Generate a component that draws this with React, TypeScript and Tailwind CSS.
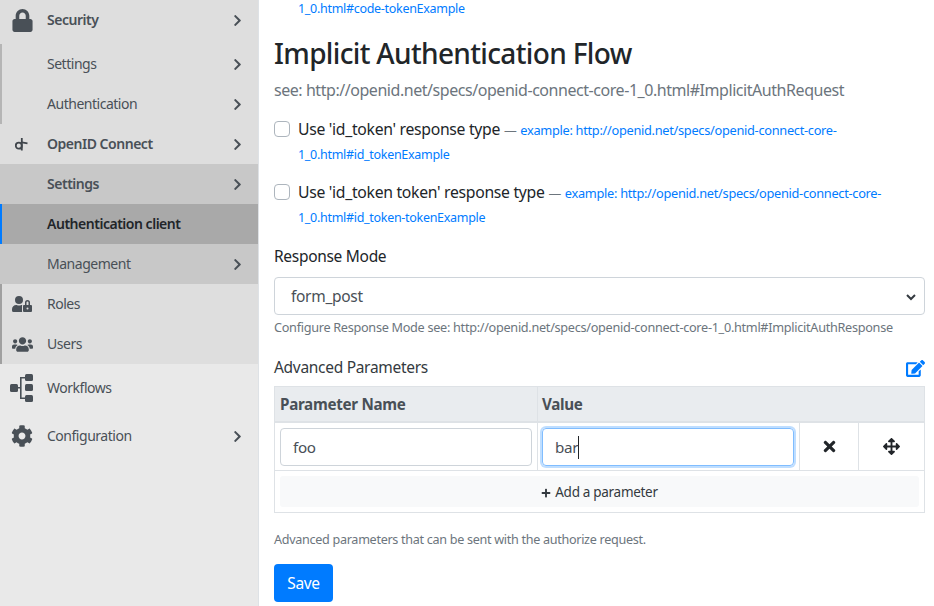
import { FaLock, FaUserLock, FaUsers, FaCog, FaChevronRight, FaEdit, FaTimes, FaArrowsAlt, FaPlus } from "react-icons/fa";

const Chevron = () => <FaChevronRight size={13} className="ml-auto mr-[14px] text-[#495057]" />;

const OpenIdIcon = () => (
  <svg width="14" height="14" viewBox="0 0 14 14" fill="none" stroke="#3f454b" strokeWidth="1.8">
    <circle cx="3.8" cy="8.7" r="3" />
    <path d="M6.8 1v12.5" />
    <path d="M6.8 5.4l5.7 0.9" />
  </svg>
);

const WorkflowIcon = () => (
  <svg width="24" height="28" viewBox="0 0 24 28" fill="#495057">
    <rect x="0" y="10" width="8" height="8" rx="1.5" />
    <rect x="15" y="0" width="8" height="7" rx="1.5" />
    <rect x="15" y="10" width="8" height="7" rx="1.5" />
    <rect x="15" y="21" width="8" height="7" rx="1.5" />
    <path d="M8 13h2v1.5H8zM10 3h5v1.5h-3.4v19H15V25h-5z" />
  </svg>
);

const Row = ({ label, icon, chevron, className = "", text = "text-[#495057]" }: { label: string; icon?: React.ReactNode; chevron?: boolean; className?: string; text?: string }) => (
  <div className={`flex items-center h-10 ${className}`}>
    <div className="w-[47px] shrink-0 flex justify-center pr-[3px]">{icon}</div>
    <span className={`text-[14px] tracking-[-0.48px] pb-[2px] ${text}`}>{label}</span>
    {chevron && <Chevron />}
  </div>
);

const Link = ({ children }: { children: React.ReactNode }) => <span className="text-[12.5px] text-[#007bff]">{children}</span>;

const Option = ({ label, first, second }: { label: string; first: string; second: string }) => (
  <div className="mt-[15px] pl-6 relative">
    <span className="absolute left-0 top-1 size-4 rounded-[4px] border border-[#adb5bd] bg-white" />
    <div className="h-6 leading-6 whitespace-nowrap">
      <span className="text-[15.75px]">{label}</span> <span className="text-[#6c757d] text-[12.8px]">—</span> <span className="text-[12.8px] text-[#007bff]">{first}</span>
    </div>
    <div className="h-6 leading-6"><Link>{second}</Link></div>
  </div>
);

export default function App() {
  return (
    <div className="flex h-[606px] w-[934px] overflow-hidden bg-white font-['Noto_Sans','Open_Sans',sans-serif] tracking-[-0.3px] text-[#212529]">
      <aside className="w-[259px] shrink-0 bg-[#e9e9e9] border-r border-[#dee2e6]">
        <div className="bg-[#dedede]">
          <Row label="Security" chevron icon={<FaLock size={23} color="#495057" />} className="h-11 pb-1 font-semibold" />
          <div className="border-l-2 border-[#b5b5b5]">
            <Row label="Settings" chevron className="-ml-[2px]" />
            <Row label="Authentication" chevron className="-ml-[2px]" />
          </div>
          <Row label="OpenID Connect" chevron icon={<OpenIdIcon />} className="font-semibold" />
          <div className="border-l-2 border-[#a0a0a0]">
            <Row label="Settings" chevron className="-ml-[2px] bg-[#c8c8c8] font-semibold" />
            <div className="-ml-[2px] border-l-2 border-[#007bff] bg-[#a9a9a9]">
              <Row label="Authentication client" className="-ml-[2px] font-semibold" text="text-[#212529]" />
            </div>
            <Row label="Management" chevron className="-ml-[2px] bg-[#c8c8c8]" />
            <Row label="Roles" icon={<FaUserLock size={20} color="#495057" />} className="-ml-[2px]" />
            <Row label="Users" icon={<FaUsers size={21} color="#495057" />} className="-ml-[2px]" />
          </div>
        </div>
        <Row label="Workflows" icon={<WorkflowIcon />} className="h-12" />
        <Row label="Configuration" chevron icon={<FaCog size={22} color="#495057" />} className="h-12" />
      </aside>

      <main className="flex-1 pl-[15px] pr-[9px]">
        <div className="pl-6 leading-[16px] -mt-px"><Link>1_0.html#code-tokenExample</Link></div>

        <h3 className="mt-[19px] text-[28px] font-medium leading-[34px] tracking-[-0.65px]">Implicit Authentication Flow</h3>
        <p className="mt-[8px] text-[16px] leading-6 tracking-[-0.45px] text-[#6c757d]">see: http://openid.net/specs/openid-connect-core-1_0.html#ImplicitAuthRequest</p>

        <Option label="Use 'id_token' response type" first="example: http://openid.net/specs/openid-connect-core-" second="1_0.html#id_tokenExample" />
        <Option label="Use 'id_token token' response type" first="example: http://openid.net/specs/openid-connect-core-" second="1_0.html#id_token-tokenExample" />

        <div className="mt-[16px] text-[15.5px] leading-6">Response Mode</div>
        <div className="mt-[9px] flex items-center h-[38px] rounded-[4px] border border-[#ced4da] pl-4 pr-2 pt-[2px] text-[15.5px] text-[#495057]">
          form_post
          <svg className="ml-auto" width="10" height="7" viewBox="0 0 10 7" fill="none" stroke="#343a40" strokeWidth="2"><path d="M1 1l4 4 4-4" /></svg>
        </div>
        <p className="mt-[2px] text-[12.7px] leading-[20px] text-[#6c757d]">Configure Response Mode see: http://openid.net/specs/openid-connect-core-1_0.html#ImplicitAuthResponse</p>

        <div className="mt-[19px] flex items-center h-6">
          <span className="text-[15.5px] text-[#343a40]">Advanced Parameters</span>
          <FaEdit size={19} className="ml-auto text-[#007bff]" />
        </div>

        <div className="mt-[6px] border border-[#dee2e6] text-[15.2px]">
          <div className="flex h-[36px] items-center bg-[#e9ecef] border-b-2 border-[#dee2e6] font-bold text-[#495057]">
            <div className="w-[263px] h-full flex items-center pl-[5px] border-r border-[#dee2e6]">Parameter Name</div>
            <div className="pl-[4px]">Value</div>
          </div>
          <div className="flex h-[48px] border-b border-[#dee2e6]">
            <div className="w-[263px] border-r border-[#dee2e6] flex items-center pl-[5px] pr-[5px]">
              <div className="flex items-center w-full h-[38px] rounded-[4px] border border-[#ced4da] pl-3 pt-[2px] text-[#495057]">foo</div>
            </div>
            <div className="w-[262px] border-r border-[#dee2e6] flex items-center pl-[4px] pr-[5px]">
              <div className="flex items-center w-full h-[38px] rounded-[4px] border border-[#80bdff] shadow-[0_0_0_2px_rgba(0,123,255,0.25)] pl-3 pt-[2px] text-[#495057]">ba<span className="border-r border-[#212529]">r</span></div>
            </div>
            <div className="w-[59px] border-r border-[#dee2e6] flex items-center justify-center"><FaTimes size={17} className="text-[#212529]" /></div>
            <div className="flex-1 flex items-center justify-center"><FaArrowsAlt size={17} className="text-[#212529]" /></div>
          </div>
          <div className="p-[5px]">
            <div className="flex items-center justify-center gap-1 h-[31px] rounded-[3px] bg-[#f8f9fa] pt-[2px] text-[13.5px] text-[#343a40]"><FaPlus size={10} />Add a parameter</div>
          </div>
        </div>

        <p className="mt-[17px] text-[12.6px] leading-[20px] text-[#6c757d]">Advanced parameters that can be sent with the authorize request.</p>
        <button className="mt-[14px] h-[38px] w-[59px] rounded-[4px] bg-[#007bff] pt-[2px] text-[15.5px] text-white">Save</button>
      </main>
    </div>
  );
}
